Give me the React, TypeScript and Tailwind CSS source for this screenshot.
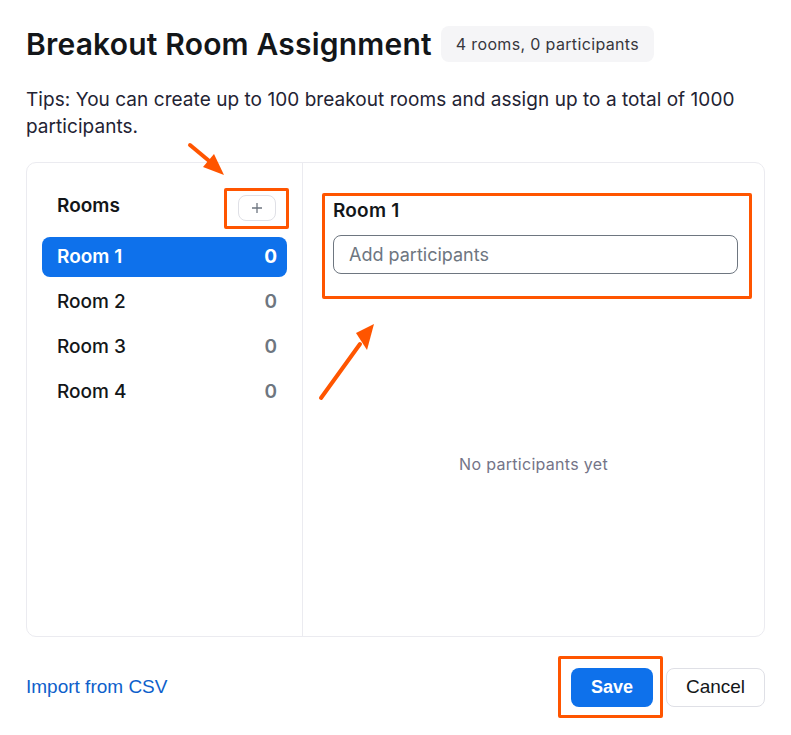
import React from "react";

const rooms = [
  { name: "Room 1", count: 0 },
  { name: "Room 2", count: 0 },
  { name: "Room 3", count: 0 },
  { name: "Room 4", count: 0 },
];

export default function App() {
  return (
    <div
      className="relative w-[791px] h-[735px] bg-white px-[26px] pt-[23px] overflow-hidden"
      style={{ fontFamily: "Inter, 'Noto Sans', sans-serif" }}
    >
      {/* Title row */}
      <div className="flex items-center gap-[9px]">
        <h1 className="text-[30px] leading-[42px] font-semibold text-[#131619] tracking-[0.2px]">
          Breakout Room Assignment
        </h1>
        <span className="h-[36px] px-[15px] flex items-center rounded-[8px] bg-[#f5f5f7] text-[16px] tracking-[0.35px] text-[#37373d]">
          4 rooms, 0 participants
        </span>
      </div>

      {/* Tips */}
      <p className="mt-[21px] text-[19px] leading-[27px] text-[#232333] tracking-[0.05px] pr-[10px]">
        Tips: You can create up to 100 breakout rooms and assign up to a total of 1000 participants.
      </p>

      {/* Panel */}
      <div className="mt-[22px] h-[475px] flex rounded-[10px] border border-[#ebebf0]">
        {/* Left column */}
        <div className="w-[276px] border-r border-[#ebebf0] pt-[32px] px-[15px]">
          <div className="flex items-center justify-between h-[26px] pl-[15px] pr-[11px]">
            <span className="text-[19px] leading-[20px] pb-[4px] font-semibold text-[#131619]">Rooms</span>
            <button className="w-[38px] h-[26px] rounded-[8px] border border-[#dfe0e6] bg-white flex items-center justify-center">
              <svg width="12" height="12" viewBox="0 0 12 12">
                <path d="M6 1v10M1 6h10" stroke="#6e7680" strokeWidth="1.3" />
              </svg>
            </button>
          </div>
          <div className="mt-[16px] flex flex-col gap-[5px]">
            {rooms.map((r, i) => (
              <div
                key={r.name}
                className={
                  i === 0
                    ? "h-[40px] rounded-[8px] bg-[#0e71eb] flex items-center justify-between pl-[15px] pr-[10px] text-white font-semibold text-[19px]"
                    : "h-[40px] rounded-[8px] flex items-center justify-between pl-[15px] pr-[10px] text-[#131619] font-medium text-[19px]"
                }
              >
                <span>{r.name}</span>
                <span className={i === 0 ? "text-white font-bold" : "text-[#6e7680] font-semibold"}>
                  {r.count}
                </span>
              </div>
            ))}
          </div>
        </div>

        {/* Right column */}
        <div className="flex-1 flex flex-col pt-[34px] pl-[30px] pr-[26px]">
          <div className="text-[19px] leading-[28px] font-semibold text-[#131619] tracking-[0.2px]">Room 1</div>
          <div className="mt-[10px] h-[39px] rounded-[8px] border border-[#6e7680] flex items-center px-[15px] text-[18px] text-[#6e7680]">
            Add participants
          </div>
          <div className="flex-1 flex items-center justify-center pt-[40px] pb-[22px] text-[16px] tracking-[0.3px] text-[#747487] pr-[4px]">
            No participants yet
          </div>
        </div>
      </div>

      {/* Footer */}
      <div
        className="mt-[31px] flex items-center justify-between"
        style={{ fontFamily: "'Liberation Sans', Arial, sans-serif" }}
      >
        <span className="text-[19px] text-[#0e5fcb]">Import from CSV</span>
        <div className="flex items-center gap-[13px]">
          <button className="w-[82px] h-[39px] rounded-[8px] bg-[#0e71eb] text-white text-[18px] font-bold">
            Save
          </button>
          <button className="w-[99px] h-[39px] rounded-[8px] border border-[#dfe0e6] bg-white text-[#131619] text-[19px]">
            Cancel
          </button>
        </div>
      </div>

      {/* Annotation overlays */}
      <div className="absolute left-[224px] top-[188px] w-[65px] h-[41px] border-[3px] border-[#ff5500] rounded-[2px] pointer-events-none" />
      <div className="absolute left-[322px] top-[193px] w-[430px] h-[106px] border-[3px] border-[#ff5500] rounded-[2px] pointer-events-none" />
      <div className="absolute left-[558px] top-[656px] w-[105px] h-[62px] border-[3px] border-[#ff5500] rounded-[2px] pointer-events-none" />
      <svg className="absolute left-0 top-0 pointer-events-none" width="791" height="735">
        <line x1="190" y1="145" x2="214" y2="165" stroke="#ff5500" strokeWidth="4" strokeLinecap="round" />
        <polygon points="224,175 203,167 214,154" fill="#ff5500" />
        <line x1="321" y1="398" x2="360" y2="344" stroke="#ff5500" strokeWidth="4" strokeLinecap="round" />
        <polygon points="374,324 356,333 367,350" fill="#ff5500" />
      </svg>
    </div>
  );
}
